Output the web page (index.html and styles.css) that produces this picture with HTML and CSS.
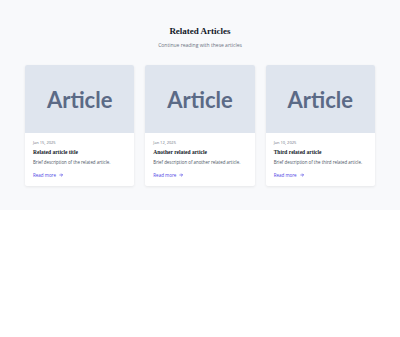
FILE: index.html
```html
<!DOCTYPE html>
<html lang="en">
<head>
  <meta charset="UTF-8">
  <title>Related Articles</title>
  <link rel="stylesheet" href="styles.css">
</head>
<body>

  <section class="related">
    <h2>Related Articles</h2>
    <p class="subtitle">Continue reading with these articles</p>

    <div class="grid">
      <div class="card">
        <div class="thumb">Article</div>
        <div class="card-body">
          <div class="date">Jan 15, 2025</div>
          <h3>Related article title</h3>
          <p class="desc">Brief description of the related article.</p>
          <a class="more" href="#">Read more <svg class="arrow" viewBox="0 0 10 10"><path d="M1 5h8M5.5 1.5L9 5l-3.5 3.5" /></svg></a>
        </div>
      </div>

      <div class="card">
        <div class="thumb">Article</div>
        <div class="card-body">
          <div class="date">Jan 12, 2025</div>
          <h3>Another related article</h3>
          <p class="desc">Brief description of another related article.</p>
          <a class="more" href="#">Read more <svg class="arrow" viewBox="0 0 10 10"><path d="M1 5h8M5.5 1.5L9 5l-3.5 3.5" /></svg></a>
        </div>
      </div>

      <div class="card">
        <div class="thumb">Article</div>
        <div class="card-body">
          <div class="date">Jan 10, 2025</div>
          <h3>Third related article</h3>
          <p class="desc">Brief description of the third related article.</p>
          <a class="more" href="#">Read more <svg class="arrow" viewBox="0 0 10 10"><path d="M1 5h8M5.5 1.5L9 5l-3.5 3.5" /></svg></a>
        </div>
      </div>
    </div>
  </section>

</body>
</html>
```

FILE: styles.css
```css
body {
  margin: 0;
  background-color: white;
  font-family: "Open Sans", Arial, sans-serif;
}

.related {
  background-color: #f8f9fb;
  padding: 24px 25px 24px;
}

h2 {
  margin: 0;
  text-align: center;
  font-family: "Liberation Serif", serif;
  font-weight: bold;
  font-size: 9px;
  line-height: 14px;
  color: #111827;
}

.subtitle {
  margin: 3px 0 16px;
  text-align: center;
  font-size: 5px;
  line-height: 8px;
  color: #6b7280;
}

.grid {
  display: grid;
  grid-template-columns: repeat(3, 1fr);
  gap: 11px;
}

.card {
  background-color: white;
  border-radius: 2px;
  overflow: hidden;
  box-shadow: 0 1px 3px rgba(0, 0, 0, 0.08);
}

.thumb {
  height: 68px;
  background-color: #dfe5ee;
  color: #5b6a86;
  font-family: Lato, sans-serif;
  font-weight: bold;
  font-size: 22px;
  display: flex;
  justify-content: center;
  align-items: center;
}

.card-body {
  padding: 7px 8px 7px;
}

.date {
  font-size: 4px;
  line-height: 6px;
  color: #6b7280;
}

h3 {
  margin: 2px 0 2px;
  font-family: "Liberation Serif", serif;
  font-weight: bold;
  font-size: 5.5px;
  line-height: 8px;
  color: #111827;
}

.desc {
  margin: 0 0 5px;
  font-size: 4.4px;
  line-height: 8px;
  color: #4b5563;
}

.more {
  display: flex;
  align-items: center;
  gap: 3px;
  font-size: 4.5px;
  line-height: 8px;
  color: #4f46e5;
  text-decoration: none;
}

.arrow {
  width: 4px;
  height: 4px;
  fill: none;
  stroke: #4f46e5;
  stroke-width: 1.6;
}
```
